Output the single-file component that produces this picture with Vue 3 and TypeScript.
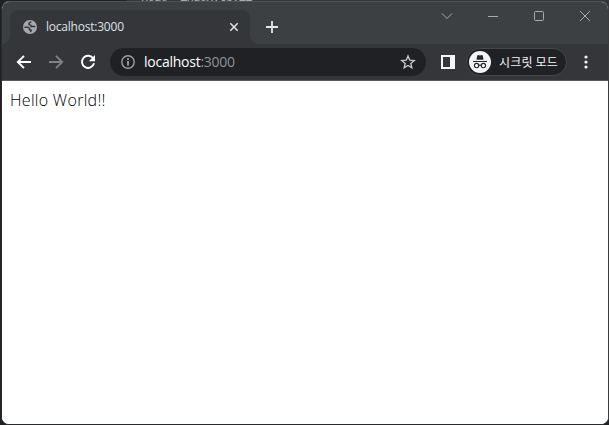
<script setup lang="ts">
const host = 'localhost'
const port = ':3000'
const message = 'Hello World!!'
const backdropText = 'node  index.ts:11'
</script>

<template>
  <div class="desktop">
    <div class="backdrop"><span class="backdrop-text">{{ backdropText }}</span></div>
    <div class="window">
      <header class="tabstrip">
        <div class="tab">
          <svg class="globe" width="14" height="14" viewBox="0 0 14 14">
            <circle cx="7" cy="7" r="7" fill="#a5a9af" />
            <path d="M1.4 7.2h3.4l1.7 1.2v1.2l1.7.6-.9 1.9M8.3 1.7 6 3.2v1.4l2 .8v1.2h4.3" fill="none" stroke="#35363a" stroke-width="1.5" />
          </svg>
          <span class="tab-title">{{ host }}{{ port }}</span>
          <svg class="tab-close" width="10" height="10" viewBox="0 0 10 10"><path d="m1.3 1.3 7.4 7.4M8.7 1.3 1.3 8.7" stroke="#e3e5e8" stroke-width="1.5" /></svg>
        </div>
        <svg class="new-tab" width="12" height="12" viewBox="0 0 12 12"><path d="M6 0v12M0 6h12" stroke="#e4e6e8" stroke-width="1.8" /></svg>
        <div class="controls">
          <svg width="12" height="12" viewBox="0 0 12 12"><path d="m1 3.5 5 5 5-5" /></svg>
          <svg width="12" height="12" viewBox="0 0 12 12"><path d="M1 6.5h10" /></svg>
          <svg width="12" height="12" viewBox="0 0 12 12"><rect x="1.5" y="1.5" width="9" height="9" rx="1" /></svg>
          <svg width="12" height="12" viewBox="0 0 12 12"><path d="m1 1 10 10M11 1 1 11" /></svg>
        </div>
      </header>
      <nav class="toolbar">
        <div class="nav-buttons">
          <svg width="16" height="16" viewBox="0 0 16 16"><path d="M15 8H2M8 1.8 1.8 8 8 14.2" fill="none" stroke="#fff" stroke-width="1.9" /></svg>
          <svg width="16" height="16" viewBox="0 0 16 16"><path d="M1 8h13M8 1.8 14.2 8 8 14.2" fill="none" stroke="#808184" stroke-width="1.9" /></svg>
          <svg width="16" height="16" viewBox="0 0 16 16"><path d="M13.3 4.7A6.1 6.1 0 1 0 14 9.3" fill="none" stroke="#fff" stroke-width="1.9" /><path d="M15 1v6.2H8.8z" fill="#fff" /></svg>
        </div>
        <div class="address">
          <svg width="14" height="14" viewBox="0 0 14 14"><circle cx="7" cy="7" r="6.2" fill="none" stroke="#9aa0a6" stroke-width="1.4" /><path d="M7 6v4.5M7 3.3v1.6" stroke="#b2b6bb" stroke-width="1.6" /></svg>
          <span class="url"><span class="host">{{ host }}</span><span class="port">{{ port }}</span></span>
          <svg class="star" width="16" height="16" viewBox="0 0 16 16"><path d="m8 2 1.7 4.1 4.5.4-3.4 2.9 1 4.4L8 11.5l-3.8 2.3 1-4.4-3.4-2.9 4.5-.4z" fill="none" stroke="#c2c5c9" stroke-width="1.4" /></svg>
        </div>
        <svg class="panel" width="14" height="14" viewBox="0 0 14 14"><path fill-rule="evenodd" d="M0 0h14v14H0zM2 2v10h7V2z" fill="#f4f5f7" /></svg>
        <div class="incognito">
          <svg width="22" height="22" viewBox="0 0 22 22">
            <circle cx="11" cy="11" r="11" fill="#f1f3f4" />
            <path d="m7.4 8.8.9-4.2.9-.6 1.8.5 1.8-.5.9.6.9 4.2z" fill="#24262a" />
            <path d="M4 10.5h14" stroke="#24262a" stroke-width="1.1" />
            <g fill="none" stroke="#24262a" stroke-width="1.1"><circle cx="7.6" cy="14.6" r="2.2" /><circle cx="14.4" cy="14.6" r="2.2" /><path d="M9.8 14.4q1.2-.7 2.4 0" /></g>
          </svg>
          <span class="mode">시크릿 모드</span>
        </div>
        <svg class="menu" width="4" height="14" viewBox="0 0 4 14" fill="#f1f3f4"><circle cx="2" cy="2" r="1.6" /><circle cx="2" cy="7" r="1.6" /><circle cx="2" cy="12" r="1.6" /></svg>
      </nav>
      <main class="page"><span class="message">{{ message }}</span></main>
    </div>
  </div>
</template>

<style>
body {
  margin: 0;
  overflow: hidden;
}
</style>

<style scoped>
* {
  box-sizing: border-box;
}
svg {
  display: block;
  flex: none;
}
.desktop {
  position: relative;
  width: 609px;
  height: 425px;
  padding: 1px 0 0 1px;
  background: #202124;
  overflow: hidden;
  font-family: "Open Sans", "Noto Sans CJK KR", sans-serif;
}
.backdrop {
  position: absolute;
  top: 0;
  left: 127px;
  width: 482px;
  height: 60px;
  background: #35363a;
}
.backdrop-text {
  position: absolute;
  left: 14px;
  top: -9px;
  font: 12.5px/14px "Liberation Mono", monospace;
  white-space: pre;
  letter-spacing: -1px;
  color: #aaa;
}
.window {
  position: relative;
  display: flex;
  flex-direction: column;
  width: 608px;
  height: 424px;
  border: 1px solid;
  border-color: #505457 #393b3d #292a2c #292a2c;
  border-radius: 8px;
  overflow: hidden;
  background: #fff;
}
.tabstrip {
  display: flex;
  flex: 0 0 42px;
  padding-top: 8px;
  background: #3c4043;
}
.tab {
  position: relative;
  display: flex;
  align-items: center;
  width: 240px;
  margin-left: 8px;
  padding: 0 11px 0 13px;
  border-radius: 8px 8px 0 0;
  background: #35363a;
}
.tab::before,
.tab::after {
  content: "";
  position: absolute;
  bottom: 0;
  width: 8px;
  height: 8px;
}
.tab::before {
  left: -8px;
  background: radial-gradient(circle at 0 0, transparent 7.5px, #35363a 8px);
}
.tab::after {
  right: -8px;
  background: radial-gradient(circle at 100% 0, transparent 7.5px, #35363a 8px);
}
.tab-title {
  margin-left: 9px;
  font-size: 12px;
  letter-spacing: -0.22px;
  line-height: 16px;
  color: #dfe1e5;
}
.tab-close {
  margin-left: auto;
}
.new-tab {
  margin: 11px 0 0 16px;
}
.controls {
  display: flex;
  gap: 34px;
  margin: 0 17px 0 auto;
}
.controls svg {
  fill: none;
  stroke: #a9acae;
  stroke-width: 1;
}
.toolbar {
  display: flex;
  align-items: center;
  flex: 0 0 37px;
  padding: 0 20px 1px 14px;
  border-bottom: 1px solid #57585b;
  background: #35363a;
}
.nav-buttons {
  display: flex;
  gap: 16px;
}
.address {
  display: flex;
  align-items: center;
  width: 316px;
  height: 28px;
  margin-left: 14px;
  padding: 0 10px 0 11px;
  border-radius: 14px;
  background: #202124;
}
.url {
  margin-left: 9px;
  font-size: 14px;
  line-height: 20px;
  letter-spacing: -0.25px;
}
.host {
  color: #fff;
}
.port {
  color: #8d9399;
}
.star {
  margin-left: auto;
}
.panel {
  margin-left: 15px;
}
.incognito {
  display: flex;
  align-items: center;
  width: 101px;
  height: 28px;
  margin-left: 11px;
  padding-left: 2px;
  border: 1px solid #46474b;
  border-radius: 14px;
  background: #202124;
}
.mode {
  margin-left: 8px;
  font-family: "Noto Sans CJK KR", sans-serif;
  font-size: 12px;
  line-height: 16px;
  letter-spacing: 0.2px;
  white-space: nowrap;
  color: #f5f6f7;
}
.menu {
  margin-left: auto;
}
.page {
  flex: 1;
  padding: 8px;
  background: #fff;
}
.message {
  display: block;
  font-size: 16px;
  font-weight: 300;
  line-height: 22px;
  letter-spacing: 0.3px;
  color: #000;
}
</style>
